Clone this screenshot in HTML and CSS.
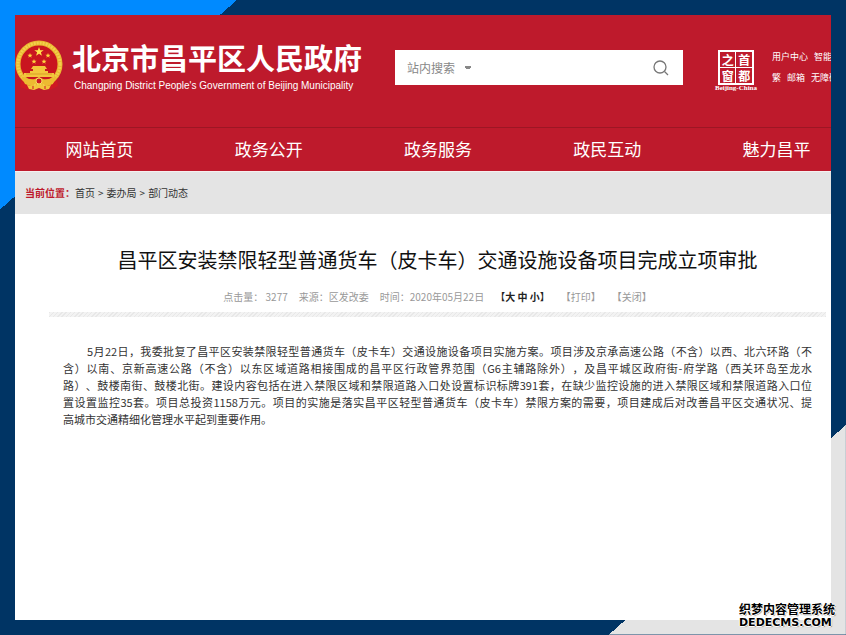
FILE: index.html
```html
<!DOCTYPE html>
<html lang="zh-CN">
<head>
  <meta charset="UTF-8" />
  <meta name="viewport" content="width=device-width, initial-scale=1.0" />
  <title>北京市昌平区人民政府</title>
  <link rel="stylesheet" href="styles.css">
</head>
<body>
  <div class="container">
    <!-- Header -->
    <header class="header">
      <a class="brand" href="#">
        <svg class="emblem" viewBox="0 0 48 52" aria-hidden="true">
          <path d="M7 37 L5 47 L13 50 L20 46 H28 L35 50 L43 46 L41 36 Z" fill="#cf1823" />
          <circle cx="24" cy="24" r="21" fill="#c9151f" stroke="#e9b62f" stroke-width="5" />
          <circle cx="24" cy="24" r="21" fill="none" stroke="#f2cf4c" stroke-width="3" stroke-dasharray="2 1" />
          <path d="M24 7l1.200 3.200h3.500l-2.800 2.100 1 3.400-2.900-2-2.900 2 1-3.400-2.800-2.100h3.500z" fill="#ffe14d" />
          <g fill="#ffd83e">
            <path id="star" d="M15 13l.7 1.700h1.800l-1.400 1.200.5 1.800-1.600-1.100-1.600 1.100.5-1.800-1.400-1.200h1.800z" />
            <use href="#star" x="18" />
            <use href="#star" x="4" y="6" />
            <use href="#star" x="14" y="6" />
          </g>
          <path d="M18 26h12l2 3h-2v2h3v2h6v4H9v-4h6v-2h3v-2h-2z" fill="#f3c63c" />
          <path d="M11 34h26" stroke="#d99f28" stroke-width="1" />
          <path d="M6 36q8 4 14 3l4-2 4 2q6 1 14-3l-4 8q-7 3-11-1h-6q-4 4-11 1z" fill="#edba31" />
          <circle cx="24" cy="41" r="3" fill="#cf1823" stroke="#f8dd62" stroke-width="1" />
          <path d="M12 45l6 1 6-1 6 1 6-1-2 4-5 1-5-2-5 2-5-1z" fill="#f3c63c" />
          <path d="M18 46v3M30 46v3M39 43v5" stroke="#cf1823" stroke-width="1" />
        </svg>
        <span class="brand-text">
          <strong class="brand-name">北京市昌平区人民政府</strong>
          <span class="brand-en">Changping District People's Government of Beijing Municipality</span>
        </span>
      </a>

      <form class="search">
        <select class="search-type" aria-label="搜索范围">
          <option>站内搜索</option>
        </select>
        <input class="search-input" type="text" aria-label="搜索" />
        <button class="search-btn" type="button" aria-label="搜索">
          <svg viewBox="0 0 16 16" width="16" height="16" fill="none" stroke="#777" stroke-width="1.300">
            <circle cx="7" cy="7" r="6" />
            <path d="M11.500 11.500 L15 15" />
          </svg>
        </button>
      </form>

      <a class="seal" href="#">
        <span class="seal-box">
          <span>之</span><span>首</span><span>窗</span><span>都</span>
        </span>
        <span class="seal-en">Beijing-China</span>
      </a>

      <div class="user-links">
        <div class="user-row"><a href="#">用户中心</a><a href="#">智能问答</a></div>
        <div class="user-row"><a href="#">繁</a><a href="#">邮箱</a><a href="#">无障碍</a></div>
      </div>
    </header>

    <!-- Navigation -->
    <nav class="nav">
      <div class="nav-list">
        <a href="#">网站首页</a>
        <a href="#">政务公开</a>
        <a href="#">政务服务</a>
        <a href="#">政民互动</a>
        <a href="#">魅力昌平</a>
      </div>
    </nav>

    <div class="crumb">
      <b>当前位置：</b><a href="#">首页</a><i>&gt;</i><a href="#">委办局</a><i>&gt;</i><a href="#">部门动态</a>
    </div>

    <!-- Article -->
    <main class="article">
      <h1>昌平区安装禁限轻型普通货车（皮卡车）交通设施设备项目完成立项审批</h1>
      <div class="meta">
        <span>点击量： 3277</span>
        <span>来源：区发改委</span>
        <span>时间：2020年05月22日</span>
        <span class="font-size">【<button type="button">大</button> <button type="button">中</button> <button type="button">小</button>】</span>
        <a href="#">【打印】</a>
        <a href="#">【关闭】</a>
      </div>
      <div class="divider"></div>
      <p class="content">
        <span class="line first">5月22日，我委批复了昌平区安装禁限轻型普通货车（皮卡车）交通设施设备项目实施方案。项目涉及京承高速公路（不含）以西、北六环路（不</span>
        <span class="line">含）以南、京新高速公路（不含）以东区域道路相接围成的昌平区行政管界范围（G6主辅路除外），及昌平城区政府街-府学路（西关环岛至龙水</span>
        <span class="line">路）、鼓楼南街、鼓楼北街。建设内容包括在进入禁限区域和禁限道路入口处设置标识标牌391套，在缺少监控设施的进入禁限区域和禁限道路入口位</span>
        <span class="line">置设置监控35套。项目总投资1158万元。项目的实施是落实昌平区轻型普通货车（皮卡车）禁限方案的需要，项目建成后对改善昌平区交通状况、提</span>
        <span class="line last">高城市交通精细化管理水平起到重要作用。</span>
      </p>
    </main>
  </div>

  <div class="watermark">
    <span>织梦内容管理系统</span>
    <span class="watermark-en">DEDECMS.COM</span>
  </div>
</body>
</html>
```
FILE: styles.css
```css
* {
  margin: 0;
  padding: 0;
  box-sizing: border-box;
}
body {
  position: relative;
  display: flex;
  min-height: 100vh;
  padding: 15px;
  font-family: "Noto Sans CJK SC", sans-serif;
  text-spacing-trim: space-all;
  color: #333;
  background:
    linear-gradient(to bottom right, #008aff 50%, transparent 50%) top left / 28% 33% no-repeat,
    linear-gradient(to top left, #e4e4e4 50%, transparent 50%) bottom right / 28% 33% no-repeat,
    #003464;
}
a {
  color: inherit;
  text-decoration: none;
}
/* Container */
.container {
  flex: 1;
  min-width: 0;
  overflow: hidden;
  background: #fff;
}
/* Header */
.header {
  display: flex;
  align-items: flex-start;
  height: 112px;
  padding-top: 25px;
  overflow: hidden;
  background: #be1a2c;
  color: #fff;
}
.brand {
  display: flex;
  flex: none;
  gap: 9px;
}
.emblem {
  width: 48px;
  height: 52px;
}
.brand-text {
  display: flex;
  flex-direction: column;
}
.brand-name {
  font-size: 29px;
  line-height: 34px;
}
.brand-en {
  padding-left: 2px;
  font: 10px/24px "Liberation Sans", Arial, sans-serif;
}
/* Search */
.search {
  display: flex;
  flex: 1;
  min-width: 200px;
  height: 35px;
  margin: 10px 32px 0 33px;
  padding: 0 14px 0 12px;
  background: #fff;
}
.search-type {
  appearance: none;
  width: 66px;
  border: none;
  outline: none;
  font: 12px "Noto Sans CJK SC", sans-serif;
  color: #888;
  background: conic-gradient(from -45deg at 50% 100%, #888 90deg, transparent 0) 58px 16px / 6px 3px no-repeat;
  background: radial-gradient(circle at 50% 0, #888 3px, transparent 3px) 58px 16px / 6px 3px no-repeat;
}
.search-input {
  flex: 1;
  min-width: 0;
  border: none;
  outline: none;
}
.search-btn {
  display: flex;
  align-items: center;
  border: none;
  background: none;
  cursor: pointer;
}
/* Capital window seal */
.seal {
  display: flex;
  flex: none;
  flex-direction: column;
  align-items: center;
  margin-top: 10px;
}
.seal-box {
  display: grid;
  grid-template-columns: 1fr 1fr;
  gap: 1px;
  width: 36px;
  height: 35px;
  border: 2px solid #fff;
  background: #fff;
}
.seal-box span {
  background: #be1a2c;
  font-size: 12px;
  font-weight: bold;
  line-height: 15px;
  text-align: center;
}
.seal-en {
  font: bold 7px/7px "Liberation Serif", serif;
}
/* User links */
.user-links {
  flex: none;
  width: 59px;
  margin: 6px 0 0 15px;
  font-size: 9px;
  line-height: 21px;
  white-space: nowrap;
}
.user-row {
  display: flex;
  gap: 6px;
}
/* Navigation */
.nav {
  overflow: hidden;
  border-top: 1px solid #9d1624;
  background: #be1a2c;
}
.nav-list {
  display: grid;
  grid-template-columns: repeat(5, 1fr);
  width: calc(100% + 30px);
}
.nav-list a {
  padding-bottom: 2px;
  font-size: 17px;
  line-height: 41px;
  color: #fff;
  text-align: center;
}
/* Breadcrumb */
.crumb {
  padding: 0 10px;
  border-top: 1px solid #f5f0f0;
  background: #e4e4e4;
  font-size: 10px;
  line-height: 42px;
}
.crumb b {
  color: #be1a2c;
}
.crumb i {
  margin: 0 3px;
  font-style: normal;
}
/* Article */
.article {
  padding: 32px 5px 40px 34px;
}
.article h1 {
  font-size: 20px;
  font-weight: normal;
  line-height: 28px;
  text-align: center;
  color: #111;
}
.meta {
  display: flex;
  justify-content: center;
  gap: 11px;
  margin: 15px 0 7px;
  font-size: 10px;
  line-height: 16px;
  color: #999;
}
.font-size {
  color: #222;
}
.font-size button {
  border: none;
  background: none;
  font: inherit;
  font-weight: bold;
  color: inherit;
  cursor: pointer;
}
.divider {
  height: 5px;
  background: repeating-linear-gradient(135deg, #e8e8e8 0 1px, #f3f3f3 1px 3px);
}
.content {
  padding: 26px 14px 0;
  font-size: 11px;
  line-height: 17px;
}
.line {
  display: block;
  text-align: justify;
  text-align-last: justify;
}
.first {
  padding-left: 24px;
}
.last {
  text-align-last: left;
}
/* Watermark */
.watermark {
  position: absolute;
  right: 11px;
  bottom: 6px;
  display: flex;
  flex-direction: column;
  font-size: 12px;
  font-weight: bold;
  line-height: 15px;
  color: #000;
  text-shadow: 1px 0 #fff, -1px 0 #fff, 0 1px #fff, 0 -1px #fff, 1px 1px 1px #777;
}
.watermark-en {
  font: bold 11px/13px "DejaVu Sans", sans-serif;
}
```
